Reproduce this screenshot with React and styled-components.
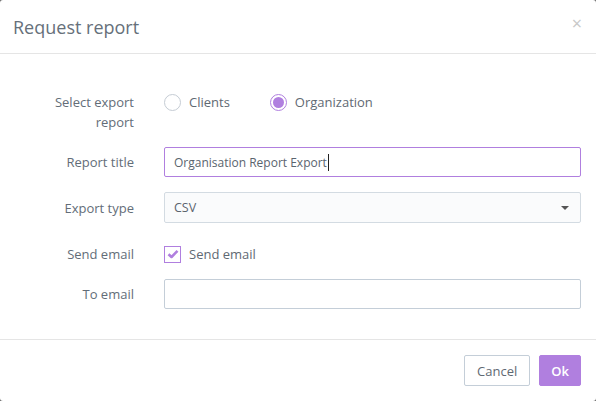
import styled, { createGlobalStyle } from "styled-components";

const GlobalStyle = createGlobalStyle`
  html, body {
    margin: 0;
    padding: 0;
    background: #6b6b6b;
  }
  body {
    font-family: "Open Sans", "Noto Sans", sans-serif;
    font-size: 13px;
    color: #636d78;
  }
`;

const PURPLE = "#b07fdf";

const App = () => {
  return (
    <>
      <GlobalStyle />
      <Modal>
        <Header>
          <Title>Request report</Title>
          <Close>×</Close>
        </Header>
        <Body>
          <Row $height={40}>
            <Label>Select export report</Label>
            <Controls>
              <Option>
                <Radio />
                Clients
              </Option>
              <Option>
                <Radio $checked />
                Organization
              </Option>
            </Controls>
          </Row>
          <Row $height={30}>
            <Label $center>Report title</Label>
            <Input $focused>
              Organisation Report Export
              <Caret />
            </Input>
          </Row>
          <Row $height={31}>
            <Label $center>Export type</Label>
            <Select>
              CSV
              <Arrow />
            </Select>
          </Row>
          <Row $height={32} $gap={9}>
            <Label $center>Send email</Label>
            <Option>
              <Checkbox>
                <svg width="12" height="10" viewBox="0 0 12 10">
                  <path
                    d="M1.5 5.2 L4.5 8 L10.5 1.8"
                    fill="none"
                    stroke={PURPLE}
                    strokeWidth="2.6"
                    strokeLinejoin="round"
                  />
                </svg>
              </Checkbox>
              Send email
            </Option>
          </Row>
          <Row $height={30}>
            <Label $center>To email</Label>
            <Input />
          </Row>
        </Body>
        <Footer>
          <Button>Cancel</Button>
          <Button $primary>Ok</Button>
        </Footer>
      </Modal>
    </>
  );
};

export default App;

const Modal = styled.div`
  width: 596px;
  height: 401px;
  background: #fff;
  border-radius: 3px;
  display: flex;
  flex-direction: column;
  overflow: hidden;
`;

const Header = styled.div`
  height: 54px;
  border-bottom: 1px solid #e5e5e5;
  display: flex;
  align-items: center;
  justify-content: space-between;
  padding: 0 14px 0 13px;
  box-sizing: border-box;
  flex: none;
`;

const Title = styled.h4`
  margin: 0;
  font-size: 18px;
  font-weight: 400;
  color: #66707a;
`;

const Close = styled.span`
  font-size: 18px;
  line-height: 1;
  color: #c8c8c8;
  margin-top: -8px;
`;

const Body = styled.div`
  flex: 1;
  padding: 38px 15px 0 0;
  display: flex;
  flex-direction: column;
  border-bottom: 1px solid #e5e5e5;
`;

const Row = styled.div`
  display: flex;
  align-items: flex-start;
  height: ${(p) => p.$height}px;
  margin-bottom: ${(p) => (p.$gap != null ? p.$gap : 15)}px;
  gap: 30px;
`;

const Label = styled.label`
  width: 104px;
  margin-left: 30px;
  flex: none;
  text-align: right;
  line-height: 20px;
  align-self: ${(p) => (p.$center ? "center" : "flex-start")};
`;

const Controls = styled.div`
  display: flex;
  gap: 40px;
`;

const Option = styled.div`
  display: flex;
  align-items: center;
  gap: 8px;
  height: 20px;
  align-self: center;
  color: #5f6973;
`;

const Radio = styled.span`
  width: 17px;
  height: 17px;
  box-sizing: border-box;
  border-radius: 50%;
  border: 1px solid ${(p) => (p.$checked ? PURPLE : "#c5ccd4")};
  background: #fff;
  display: flex;
  align-items: center;
  justify-content: center;
  &::after {
    content: "";
    display: ${(p) => (p.$checked ? "block" : "none")};
    width: 11px;
    height: 11px;
    border-radius: 50%;
    background: ${PURPLE};
  }
`;

const Checkbox = styled.span`
  width: 17px;
  height: 17px;
  box-sizing: border-box;
  border: 1px solid ${PURPLE};
  display: flex;
  align-items: center;
  justify-content: center;
`;

const Input = styled.div`
  flex: 1;
  height: 100%;
  box-sizing: border-box;
  border: 1px solid ${(p) => (p.$focused ? PURPLE : "#c4ced8")};
  border-radius: 2px;
  padding: 0 9px;
  display: flex;
  align-items: center;
  font-size: 12px;
  color: #5a646e;
  background: #fff;
`;

const Caret = styled.span`
  width: 1px;
  height: 17px;
  background: #222;
  margin-left: 1px;
`;

const Select = styled.div`
  flex: 1;
  height: 100%;
  box-sizing: border-box;
  border: 1px solid #d3dbe2;
  border-radius: 2px;
  padding: 0 11px 0 9px;
  display: flex;
  align-items: center;
  justify-content: space-between;
  font-size: 12.5px;
  color: #5a646e;
  background: #fafbfc;
`;

const Arrow = styled.span`
  width: 0;
  height: 0;
  border-left: 4px solid transparent;
  border-right: 4px solid transparent;
  border-top: 4px solid #555;
`;

const Footer = styled.div`
  flex: none;
  height: 61px;
  box-sizing: border-box;
  padding: 15px 15px 0 0;
  display: flex;
  justify-content: flex-end;
  align-items: flex-start;
  gap: 9px;
`;

const Button = styled.button`
  height: 31px;
  padding: 0 ${(p) => (p.$primary ? "11px" : "12px")};
  font-family: inherit;
  font-size: 13px;
  border-radius: 2px;
  border: 1px solid ${(p) => (p.$primary ? PURPLE : "#c4ced8")};
  background: ${(p) => (p.$primary ? PURPLE : "#fff")};
  color: ${(p) => (p.$primary ? "#fff" : "#5f6973")};
  font-weight: ${(p) => (p.$primary ? 600 : 400)};
  cursor: pointer;
`;
